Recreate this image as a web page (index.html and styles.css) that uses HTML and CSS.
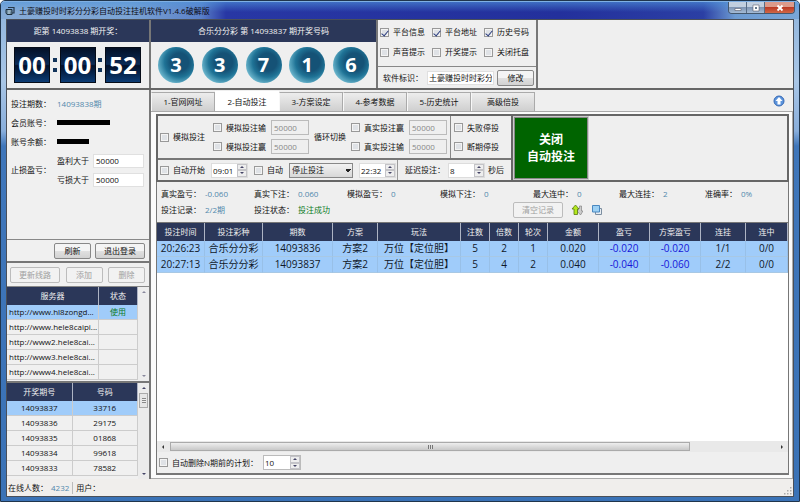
FILE: index.html
```html
<!DOCTYPE html>
<html lang="zh-CN">
<head>
    <meta charset="UTF-8">
    <meta name="viewport" content="width=device-width, initial-scale=1.0">
    <title>土豪赚投时时彩分分彩自动投注挂机软件V1.4.6破解版</title>
    <link rel="stylesheet" href="styles.css">
</head>
<body>
    <div class="window">
        <!-- Title bar -->
        <header class="titlebar">
            <svg class="app-icon" viewBox="0 0 10 10">
                <path d="M3 1.500h6v5.500h-2" fill="none" stroke="#25384a" stroke-width="1.200"/>
                <path d="M1 3.500h6v5H2L1 7z" fill="#6d8ba0" stroke="#1f303e"/>
                <path d="M3 5h2.500M3 7h2" stroke="#e0eef5" stroke-width="0.800"/>
            </svg>
            <h1>土豪赚投时时彩分分彩自动投注挂机软件V1.4.6破解版</h1>
            <div class="window-buttons">
                <button type="button" aria-label="最小化"><svg viewBox="0 0 10 8"><path d="M2 4.500h6v2H2z" fill="#fff" stroke="#445" stroke-width="0.500"/></svg></button>
                <button type="button" aria-label="最大化"><svg viewBox="0 0 10 8"><path d="M2 1h6v6H2z" fill="#fff" stroke="#445" stroke-width="0.500"/><path d="M4 3h2v2H4z" fill="#678"/></svg></button>
                <button type="button" class="close" aria-label="关闭"><svg viewBox="0 0 10 8"><path d="M2.500 1.500l5 5M7.500 1.500l-5 5" stroke="#fff" stroke-width="1.800"/></svg></button>
            </div>
        </header>

        <div class="client">
            <!-- Countdown, last draw and options -->
            <div class="top">
                <section class="countdown">
                    <h2>距第 14093838 期开奖：</h2>
                    <div class="clock">
                        <span class="flip">00</span><span class="colon"></span>
                        <span class="flip">00</span><span class="colon"></span>
                        <span class="flip">52</span>
                    </div>
                </section>
                <section class="last-draw">
                    <h2>合乐分分彩 第 14093837 期开奖号码</h2>
                    <div class="balls">
                        <span class="ball">3</span>
                        <span class="ball">3</span>
                        <span class="ball">7</span>
                        <span class="ball">1</span>
                        <span class="ball">6</span>
                    </div>
                </section>
                <section class="options">
                    <div class="option-list">
                        <label><input type="checkbox" checked>平台信息</label>
                        <label><input type="checkbox" checked>平台地址</label>
                        <label><input type="checkbox" checked>历史号码</label>
                        <label><input type="checkbox">声音提示</label>
                        <label><input type="checkbox">开奖提示</label>
                        <label><input type="checkbox">关闭托盘</label>
                    </div>
                    <div class="software-name">
                        <label for="software_name">软件标识：</label>
                        <input type="text" id="software_name" value="土豪赚投时时彩分">
                        <button type="button" class="btn">修改</button>
                    </div>
                </section>
            </div>

            <div class="middle">
                <aside class="sidebar">
                    <!-- Account -->
                    <section class="account">
                        <div class="account-info">
                            <span>投注期数：</span><span class="value">14093838期</span>
                            <span>会员账号：</span><span><i class="masked user"></i></span>
                            <span>账号余额：</span><span><i class="masked"></i></span>
                            <span class="stop-label">止损盈亏：</span>
                            <div class="stop-row">
                                <label for="win_limit">盈利大于</label>
                                <input type="text" id="win_limit" value="50000">
                            </div>
                            <div class="stop-row">
                                <label for="lose_limit">亏损大于</label>
                                <input type="text" id="lose_limit" value="50000">
                            </div>
                        </div>
                        <div class="account-buttons">
                            <button type="button" class="btn">刷新</button>
                            <button type="button" class="btn wide">退出登录</button>
                        </div>
                    </section>

                    <!-- Servers -->
                    <div class="server-buttons">
                        <button type="button" class="btn wide" disabled>更新线路</button>
                        <button type="button" class="btn" disabled>添加</button>
                        <button type="button" class="btn" disabled>删除</button>
                    </div>
                    <div class="list servers">
                        <table>
                            <colgroup><col class="col-server"><col></colgroup>
                            <thead>
                                <tr><th>服务器</th><th>状态</th></tr>
                            </thead>
                            <tbody>
                                <tr class="selected"><td>http://www.hl8zongd...</td><td class="green">使用</td></tr>
                                <tr><td>http://www.hele8caipi...</td><td></td></tr>
                                <tr><td>http://www2.hele8cai...</td><td></td></tr>
                                <tr><td>http://www3.hele8cai...</td><td></td></tr>
                                <tr><td>http://www4.hele8cai...</td><td></td></tr>
                            </tbody>
                        </table>
                        <div class="vscroll off"><i class="up"></i><i class="down"></i></div>
                    </div>

                    <!-- Draw history -->
                    <div class="list draws">
                        <table>
                            <thead>
                                <tr><th>开奖期号</th><th>号码</th></tr>
                            </thead>
                            <tbody>
                                <tr class="selected"><td>14093837</td><td>33716</td></tr>
                                <tr><td>14093836</td><td>29175</td></tr>
                                <tr><td>14093835</td><td>01868</td></tr>
                                <tr><td>14093834</td><td>99618</td></tr>
                                <tr><td>14093833</td><td>78582</td></tr>
                            </tbody>
                        </table>
                        <div class="vscroll"><i class="up"></i><b class="thumb"></b><i class="down"></i></div>
                    </div>
                </aside>

                <main class="main">
                    <nav class="tabs">
                        <button type="button">1-官网网址</button>
                        <button type="button" class="active">2-自动投注</button>
                        <button type="button">3-方案设定</button>
                        <button type="button">4-参考数据</button>
                        <button type="button">5-历史统计</button>
                        <button type="button">高级倍投</button>
                        <a href="#" class="collapse" aria-label="收起">
                            <svg viewBox="0 0 12 12">
                                <circle cx="6" cy="6" r="5" fill="#5c94dc" stroke="#3568b4"/>
                                <path d="M6 2L9.500 6H7.500v3.500h-3V6h-2z" fill="#fff"/>
                            </svg>
                        </a>
                    </nav>

                    <div class="page">
                        <!-- Bet settings -->
                        <div class="settings">
                            <div class="settings-form">
                                <div class="settings-row limits">
                                    <div class="simulate">
                                        <label><input type="checkbox">模拟投注</label>
                                        <div class="limit-grid">
                                            <label><input type="checkbox">模拟投注输</label><input type="text" value="50000" aria-label="模拟投注输" disabled>
                                            <label><input type="checkbox">模拟投注赢</label><input type="text" value="50000" aria-label="模拟投注赢" disabled>
                                        </div>
                                        <span>循环切换</span>
                                        <div class="limit-grid">
                                            <label><input type="checkbox">真实投注赢</label><input type="text" value="50000" aria-label="真实投注赢" disabled>
                                            <label><input type="checkbox">真实投注输</label><input type="text" value="50000" aria-label="真实投注输" disabled>
                                        </div>
                                    </div>
                                    <div class="stops">
                                        <label><input type="checkbox">失败停投</label>
                                        <label><input type="checkbox">断期停投</label>
                                    </div>
                                </div>
                                <div class="settings-row timing">
                                    <div class="schedule">
                                        <label><input type="checkbox">自动开始</label>
                                        <span class="spinner"><input type="text" value="09:01" aria-label="开始时间"><span class="arrows"><button type="button" class="up" aria-label="增加"></button><button type="button" class="down" aria-label="减少"></button></span></span>
                                        <label><input type="checkbox">自动</label>
                                        <select aria-label="自动操作"><option>停止投注</option></select>
                                        <span class="spinner"><input type="text" value="22:32" aria-label="停止时间"><span class="arrows"><button type="button" class="up" aria-label="增加"></button><button type="button" class="down" aria-label="减少"></button></span></span>
                                    </div>
                                    <div class="delay">
                                        <label for="delay">延迟投注：</label>
                                        <span class="spinner"><input type="text" id="delay" value="8"><span class="arrows"><button type="button" class="up" aria-label="增加"></button><button type="button" class="down" aria-label="减少"></button></span></span>
                                        <span>秒后</span>
                                    </div>
                                </div>
                            </div>
                            <button type="button" class="auto-bet">关闭<br>自动投注</button>
                        </div>

                        <!-- Statistics -->
                        <div class="stats">
                            <div class="stats-row">
                                <span>真实盈亏：<b>-0.060</b></span>
                                <span>真实下注：<b>0.060</b></span>
                                <span>模拟盈亏：<b>0</b></span>
                                <span>模拟下注：<b>0</b></span>
                                <span>最大连中：<b>0</b></span>
                                <span>最大连挂：<b>2</b></span>
                                <span>准确率：<b>0%</b></span>
                            </div>
                            <div class="record-row">
                                <span>投注记录：<b>2/2期</b></span>
                                <span>投注状态：<b class="green">投注成功</b></span>
                                <div class="tools">
                                    <button type="button" class="btn wide" disabled>清空记录</button>
                                    <button type="button" class="icon-btn" aria-label="排序">
                                        <svg viewBox="0 0 12 12">
                                            <path d="M7 4.500h1.500V2h2v5H12L9.500 11 6.500 7.500z" fill="#ccc" stroke="#777" stroke-width="0.600"/>
                                            <path d="M4.500 1L8 5H6.500v5.500h-3.500V5H1z" fill="#b4e81c" stroke="#587a10" stroke-width="0.800"/>
                                        </svg>
                                    </button>
                                    <button type="button" class="icon-btn" aria-label="窗口">
                                        <svg viewBox="0 0 12 12">
                                            <path d="M4.500 4.500h6v6h-6z" fill="#e8edf2" stroke="#7c8ea0"/>
                                            <path d="M1.500 1.500h7v6.500h-7z" fill="#9cd0f4" stroke="#4a88c0"/>
                                        </svg>
                                    </button>
                                </div>
                            </div>
                        </div>

                        <!-- Bet records -->
                        <div class="records">
                            <table>
                                <colgroup>
                                    <col class="w48"><col class="w58"><col class="w70"><col class="w45"><col class="w83">
                                    <col class="w29"><col class="w29"><col class="w29"><col class="w51"><col class="w51">
                                    <col class="w51"><col class="w45"><col>
                                </colgroup>
                                <thead>
                                    <tr>
                                        <th>投注时间</th><th>投注彩种</th><th>期数</th><th>方案</th><th>玩法</th>
                                        <th>注数</th><th>倍数</th><th>轮次</th><th>金额</th><th>盈亏</th>
                                        <th>方案盈亏</th><th>连挂</th><th>连中</th>
                                    </tr>
                                </thead>
                                <tbody>
                                    <tr>
                                        <td>20:26:23</td><td>合乐分分彩</td><td>14093836</td><td>方案2</td><td>万位【定位胆】</td>
                                        <td>5</td><td>2</td><td>1</td><td>0.020</td><td class="loss">-0.020</td>
                                        <td class="loss">-0.020</td><td>1/1</td><td>0/0</td>
                                    </tr>
                                    <tr>
                                        <td>20:27:13</td><td>合乐分分彩</td><td>14093837</td><td>方案2</td><td>万位【定位胆】</td>
                                        <td>5</td><td>4</td><td>2</td><td>0.040</td><td class="loss">-0.040</td>
                                        <td class="loss">-0.060</td><td>2/2</td><td>0/0</td>
                                    </tr>
                                </tbody>
                            </table>
                        </div>
                        <div class="hscroll"><i class="left"></i><div class="track"><b class="thumb"></b></div><i class="right"></i></div>

                        <div class="cleanup">
                            <label><input type="checkbox">自动删除N期前的计划：</label>
                            <span class="spinner"><input type="text" value="10" aria-label="期数"><span class="arrows"><button type="button" class="up" aria-label="增加"></button><button type="button" class="down" aria-label="减少"></button></span></span>
                        </div>
                    </div>
                </main>
            </div>

            <footer class="statusbar">
                <span class="online">在线人数：<b>4232</b></span>
                <span>用户：</span>
                <svg class="grip" viewBox="0 0 8 8"><path d="M6 0h1.500v1.500H6zM6 3h1.500v1.500H6zM3 3h1.500v1.500H3zM6 6h1.500v1.500H6zM3 6h1.500v1.500H3zM0 6h1.500v1.500H0z" fill="#aaa"/></svg>
            </footer>
        </div>
    </div>
</body>
</html>
```

FILE: styles.css
```css
* {
    box-sizing: border-box;
}

body {
    margin: 0;
    font-family: "Open Sans", "Noto Sans CJK SC", sans-serif;
    font-size: 8px;
    line-height: 12px;
    color: #111;
}

h1, h2 {
    margin: 0;
    font-weight: normal;
}

b, i {
    font-weight: normal;
    font-style: normal;
}

button, input, select {
    margin: 0;
    padding: 0;
    font: inherit;
    color: inherit;
}

svg {
    display: block;
}

/* Window frame */
.window {
    display: flex;
    flex-direction: column;
    min-height: 100vh;
    padding: 0 5px 4px;
    border: 1px solid #20354c;
    border-radius: 5px 5px 0 0;
    background: linear-gradient(#8fb4dc 0, #a9c6e6 80px, #89aedb 130px, #3f76ba 145px, #3a72b6 100%);
}

.titlebar {
    display: flex;
    align-items: center;
    height: 18px;
    margin: 0 -5px;
    padding-left: 4px;
    border-top: 1px solid #7fb0e4;
    border-radius: 4px 4px 0 0;
    background:
        linear-gradient(rgba(80, 150, 220, 0.6), rgba(60, 110, 200, 0) 10px),
        linear-gradient(90deg, #86abd6 0, #7ba3d4 130px, #5a80c8 200px, #2837a4 225px, #23309c 70%, #2b3fa4 88%, #6d9bd2 92%, #79a6d8 100%);
}

.titlebar h1 {
    margin-left: 4px;
    flex: 1;
    font-size: 8px;
    color: #0a0a14;
    white-space: nowrap;
}

.app-icon {
    width: 10px;
    height: 10px;
}

.window-buttons {
    display: flex;
    align-self: flex-start;
    margin-right: 4px;
    border: 1px solid #44586e;
    border-top: 0;
    border-radius: 0 0 4px 4px;
    overflow: hidden;
}

.window-buttons button {
    width: 18px;
    height: 11px;
    border: 0;
    border-right: 1px solid #566b84;
    background: linear-gradient(#c2cfdf 45%, #8096b4 50%, #a4bbd6);
}

.window-buttons svg {
    width: 10px;
    height: 8px;
    margin: 0 auto;
}

.window-buttons .close {
    width: 29px;
    border-right: 0;
    background: linear-gradient(#dc9a8a 45%, #bc3a24 50%, #d06848);
}

.client {
    display: flex;
    flex-direction: column;
    flex: 1;
    border: 1px solid #4a4f58;
    background: #efefef;
}

/* Top row */
.top {
    display: flex;
    height: 70px;
    border-bottom: 2px solid #666;
}

.top section {
    border-right: 2px solid #777;
}

.top h2 {
    height: 22px;
    font-size: 8px;
    line-height: 22px;
    text-align: center;
    color: #f4f4f4;
    background: #2b3759;
}

.countdown {
    width: 144px;
}

.clock {
    display: flex;
    align-items: center;
    justify-content: space-between;
    padding: 5px 8px 5px 7px;
}

.flip {
    width: 36px;
    height: 36px;
    border: 1px solid #060c18;
    font-size: 24px;
    font-weight: bold;
    line-height: 34px;
    text-align: center;
    color: #fff;
    background: linear-gradient(#041026, #0a2a56 48%, #02102a 52%, #0c3c74);
}

.colon {
    width: 4px;
    height: 14px;
    border: solid #12345a;
    border-width: 4px 0;
}

.last-draw {
    width: 227px;
}

.balls {
    display: flex;
    justify-content: space-between;
    padding: 5px 7px;
}

.ball {
    width: 36px;
    height: 36px;
    border-radius: 50%;
    font-size: 20px;
    font-weight: bold;
    line-height: 36px;
    text-align: center;
    color: #fff;
    background: radial-gradient(circle at 60% 42%, #155276 30%, #1f7396 50%, #7cc4d8 80%);
}

.options {
    width: 160px;
}

.option-list {
    display: grid;
    grid-template-columns: repeat(3, 52px);
    grid-auto-rows: 20px;
    height: 46px;
    padding: 2px 0 0 2px;
}

.software-name {
    display: flex;
    align-items: center;
    height: 22px;
    padding: 0 2px 0 5px;
    border-top: 1px solid #888;
}

.software-name label {
    width: 44px;
}

.software-name input[type="text"] {
    flex: 1;
    min-width: 0;
    margin-right: 3px;
    padding: 0 1px;
}

/* Form controls */
label {
    display: flex;
    align-items: center;
    white-space: nowrap;
}

input[type="checkbox"] {
    display: flex;
    justify-content: center;
    width: 9px;
    height: 9px;
    margin-right: 4px;
    border: 1px solid #999;
    background: #dfe2e6;
    box-shadow: inset 0 0 0 1px #f4f4f4;
    appearance: none;
}

input[type="checkbox"]:checked::after {
    content: "";
    width: 3px;
    height: 6px;
    border: solid #2c3e80;
    border-width: 0 1px 1px 0;
    transform: rotate(40deg);
}

input[type="text"] {
    height: 14px;
    padding: 0 2px;
    border: 1px solid #e0e0e0;
    background: #fff;
}

input[type="text"]:disabled {
    border-color: #bbb;
    color: #888;
    background: #efefef;
}

.btn {
    width: 37px;
    height: 16px;
    border: 1px solid #888;
    border-radius: 2px;
    line-height: 12px;
    background: linear-gradient(#f4f4f4 48%, #e0e0e0 52%, #d2d2d2);
}

.btn.wide {
    width: 50px;
}

.btn:disabled {
    border-color: #bcbcbc;
    color: #a0a0a0;
    background: #f2f2f2;
}

.spinner {
    display: flex;
    width: 37px;
    height: 15px;
    border: 1px solid #ddd;
    background: #fff;
}

.spinner input[type="text"] {
    flex: 1;
    min-width: 0;
    height: 13px;
    padding: 0 0 0 1px;
    border: 0;
}

.arrows {
    display: flex;
    flex-direction: column;
    width: 10px;
}

.arrows button {
    display: flex;
    flex: 1;
    align-items: center;
    justify-content: center;
    border: 1px solid #c4c4c8;
    background: #eee;
}

.up::before, .down::before, .left::before, .right::before {
    content: "";
    display: block;
    border: 2px solid transparent;
}

.up::before {
    border-top: 0;
    border-bottom-color: #446;
}

.down::before {
    border-bottom: 0;
    border-top-color: #446;
}

.left::before {
    border-left: 0;
    border-right-color: #333;
}

.right::before {
    border-right: 0;
    border-left-color: #333;
}

.value, .stats b, .statusbar b {
    color: #5088ac;
}

.green, .stats b.green {
    color: #0a7a1e;
}

/* Sidebar */
.middle {
    display: flex;
    flex: 1;
}

.sidebar {
    display: flex;
    flex-direction: column;
    width: 144px;
    border-right: 2px solid #777;
    background: #f0f0f0;
}

.account {
    border-bottom: 2px solid #777;
}

.account-info {
    display: grid;
    grid-template-columns: 46px 1fr;
    grid-template-rows: repeat(5, 19px);
    align-items: center;
    height: 149px;
    padding: 4px 5px 0 4px;
}

.masked {
    display: block;
    width: 32px;
    height: 5px;
    background: #000;
}

.masked.user {
    width: 53px;
}

.stop-label {
    grid-row: span 2;
}

.stop-row {
    display: flex;
    justify-content: space-between;
}

.stop-row input {
    width: 51px;
}

.account-buttons {
    display: flex;
    justify-content: flex-end;
    gap: 4px;
    padding: 3px 4px 2px;
    border-top: 1px solid #888;
}

.server-buttons {
    display: flex;
    justify-content: space-between;
    padding: 4px 4px 3px 3px;
}

table {
    width: 100%;
    border-collapse: separate;
    border-spacing: 0;
    table-layout: fixed;
}

th, td {
    padding: 0;
    font-weight: normal;
    text-align: center;
    white-space: nowrap;
}

th {
    height: 18px;
    border-right: 1px solid #aeb4c4;
    color: #f0f0f0;
    background: #2b3759;
}

.list {
    display: flex;
    align-items: stretch;
    height: 95px;
    overflow: hidden;
    border-top: 1px solid #888;
}

.list table {
    flex: 1;
    align-self: flex-start;
}

.list td {
    height: 15px;
    border-right: 1px solid #ccc;
    border-bottom: 1px solid #ccc;
}

.col-server {
    width: 92px;
}

.servers td:first-child {
    padding-left: 2px;
    text-align: left;
}

.selected {
    background: #a0ccfa;
}

.draws {
    flex: 1;
    border-top: 2px solid #777;
}

.vscroll {
    display: flex;
    flex-direction: column;
    align-items: center;
    width: 11px;
    padding: 4px 0;
    background: #ececec;
}

.vscroll .down {
    margin-top: auto;
}

.vscroll.off {
    opacity: 0.6;
}

.vscroll .thumb {
    width: 9px;
    height: 15px;
    margin-top: 4px;
    border: 1px solid #aaa;
    background: repeating-linear-gradient(#888 0 1px, #eee 1px 2px) center / 4px 5px no-repeat #e6e6e6;
}

/* Main area */
.main {
    display: flex;
    flex-direction: column;
    flex: 1;
    min-width: 0;
    padding-top: 1px;
}

.tabs {
    display: flex;
    align-items: flex-end;
    height: 20px;
}

.tabs button {
    width: 64px;
    height: 19px;
    border: 1px solid #aaa;
    border-left-color: #f8f8f8;
    border-bottom: 0;
    background: linear-gradient(#ededed, #cfcfcf);
}

.tabs .active {
    height: 20px;
    border-color: #fff;
    background: #fff;
}

.collapse {
    align-self: center;
    margin-left: auto;
    padding-right: 8px;
}

.collapse svg {
    width: 12px;
    height: 12px;
}

.page {
    display: flex;
    flex-direction: column;
    flex: 1;
    padding: 2px 3px 3px 5px;
    border: 1px solid #aaa;
    border-width: 1px 1px 1px 0;
    background: #fbfbfb;
}

.settings {
    display: flex;
    border: 2px solid #666;
    background: #efefef;
}

.settings-form {
    width: 355px;
    border-right: 2px solid #666;
}

.settings-row {
    display: flex;
}

.limits {
    height: 44px;
    border-bottom: 2px solid #777;
}

.simulate {
    display: flex;
    align-items: center;
    gap: 5px;
    width: 293px;
    padding-left: 2px;
    border-right: 1px solid #888;
}

.simulate > label {
    width: 48px;
}

.limit-grid {
    display: grid;
    grid-template-columns: 58px 38px;
    row-gap: 4px;
}

.limit-grid input[type="text"] {
    height: 15px;
}

.stops {
    display: grid;
    grid-template-rows: 19px 19px;
    align-content: center;
    padding-left: 3px;
}

.timing {
    height: 20px;
}

.schedule {
    display: flex;
    align-items: center;
    gap: 6px;
    width: 240px;
    padding-left: 2px;
    border-right: 1px solid #999;
}

.schedule select {
    width: 64px;
    height: 15px;
    padding-left: 2px;
    border: 1px solid #888;
    border-radius: 0;
    appearance: none;
    background:
        linear-gradient(to bottom left, #222 50%, transparent 50%) right 4px center / 3px 3px no-repeat,
        linear-gradient(to bottom right, #222 50%, transparent 50%) right 1px center / 3px 3px no-repeat,
        linear-gradient(#f2f2f2, #d8d8d8);
}

.delay {
    display: flex;
    align-items: center;
    gap: 3px;
    padding-left: 7px;
}

.auto-bet {
    width: 74px;
    margin: 1px;
    border: 1px solid #888;
    outline: 1px solid #ccc;
    font-size: 12px;
    font-weight: bold;
    line-height: 17px;
    color: #fff;
    background: #006400;
}

.stats {
    padding: 4px;
    border: solid #777;
    border-width: 0 1px;
    background: #efefef;
}

.stats b {
    margin-left: 4px;
}

.stats-row {
    display: grid;
    grid-template-columns: 93px 93px 93px 93px 86px 86px 1fr;
    line-height: 16px;
}

.record-row {
    display: grid;
    grid-template-columns: 93px 259px 1fr;
    align-items: center;
}

.tools {
    display: flex;
    align-items: center;
    gap: 8px;
}

.icon-btn {
    border: 0;
    background: none;
}

.icon-btn svg {
    width: 12px;
    height: 12px;
}

.records {
    flex: 1;
    border: 1px solid #777;
    border-bottom: 0;
    background: #fff;
}

.records td {
    height: 16px;
    border-right: 1px solid #98c0e8;
    border-bottom: 1px solid #a8c8e4;
    font-size: 10px;
    line-height: 15px;
    color: #101828;
    background: #a0ccfa;
}

.records td.loss {
    color: #1414d8;
}

.w29 { width: 29px; }
.w45 { width: 45px; }
.w48 { width: 48px; }
.w51 { width: 51px; }
.w58 { width: 58px; }
.w70 { width: 70px; }
.w83 { width: 83px; }

.hscroll {
    display: flex;
    align-items: center;
    gap: 6px;
    height: 11px;
    padding: 0 5px;
    border: solid #777;
    border-width: 0 1px;
    background: #e9e9e9;
}

.track {
    flex: 1;
}

.hscroll .thumb {
    display: block;
    width: 86%;
    height: 9px;
    border: 1px solid #aaa;
    background: repeating-linear-gradient(90deg, #777 0 1px, #ddd 1px 2px) center / 5px 4px no-repeat, linear-gradient(#eee, #c8c8c8);
}

.cleanup {
    display: flex;
    align-items: center;
    gap: 5px;
    height: 23px;
    padding-left: 2px;
    border: solid #777;
    border-width: 0 1px 2px;
    background: #efefef;
}

.cleanup .spinner {
    width: 38px;
    border-color: #bbb;
}

/* Status bar */
.statusbar {
    display: flex;
    align-items: center;
    height: 17px;
    padding-left: 1px;
    background: #f0eeec;
}

.online {
    margin-right: 3px;
    padding-right: 3px;
    border-right: 1px solid #bbb;
}

.online b {
    margin-left: 3px;
}

.grip {
    align-self: flex-end;
    width: 8px;
    height: 8px;
    margin: 0 1px 1px auto;
}
```
